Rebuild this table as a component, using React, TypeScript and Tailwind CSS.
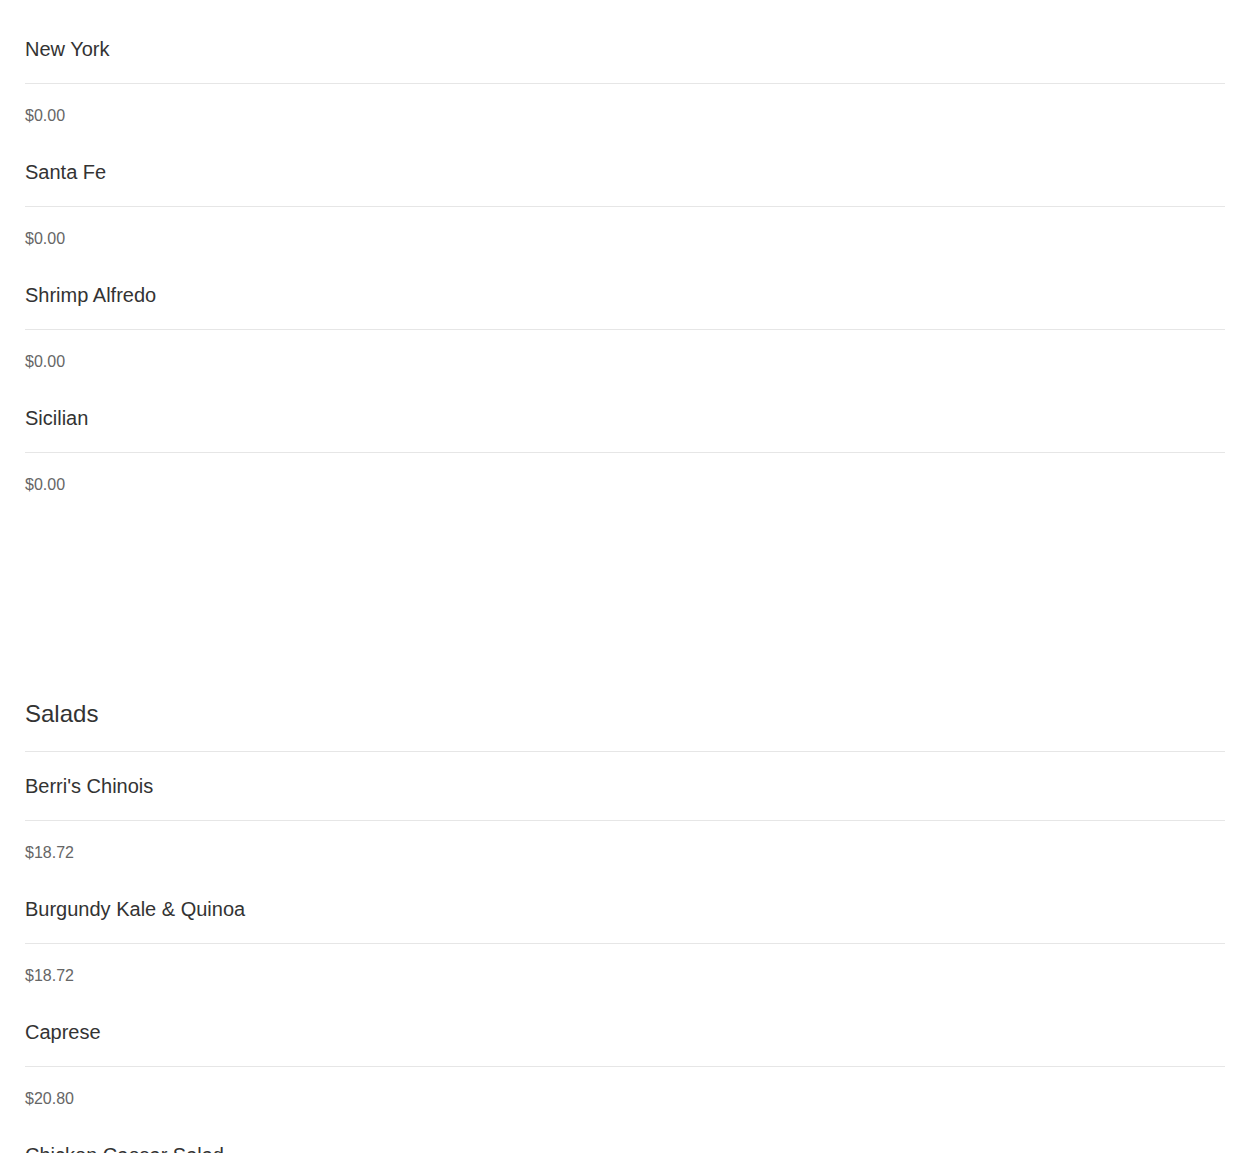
import React from 'react'

type Item = { name: string; price: string }

const pizzas: Item[] = [
  { name: 'New York', price: '$0.00' },
  { name: 'Santa Fe', price: '$0.00' },
  { name: 'Shrimp Alfredo', price: '$0.00' },
  { name: 'Sicilian', price: '$0.00' },
]

const salads: Item[] = [
  { name: "Berri's Chinois", price: '$18.72' },
  { name: 'Burgundy Kale & Quinoa', price: '$18.72' },
  { name: 'Caprese', price: '$20.80' },
  { name: 'Chicken Caesar Salad', price: '$18.72' },
]

const MenuItem = ({ item }: { item: Item }) => (
  <div>
    <div className="pt-[12px] pb-[22px] border-b border-[#e6e6e6] text-[20px] leading-[24px] text-[#333]">
      {item.name}
    </div>
    <div className="mt-[22px] mb-[22px] text-[16px] leading-[20px] text-[#666]">{item.price}</div>
  </div>
)

export default function App() {
  return (
    <div className="min-h-screen bg-white p-[25px] font-['Liberation_Sans',Arial,sans-serif]">
      <div>
        {pizzas.map((p) => (
          <MenuItem key={p.name} item={p} />
        ))}
      </div>

      <div className="mt-[205px]">
        <h2 className="pb-[23px] border-b border-[#e6e6e6] text-[24px] leading-[28px] text-[#333]">Salads</h2>
        <div className="mt-[10px]">
          {salads.map((s) => (
            <MenuItem key={s.name} item={s} />
          ))}
        </div>
      </div>
    </div>
  )
}
